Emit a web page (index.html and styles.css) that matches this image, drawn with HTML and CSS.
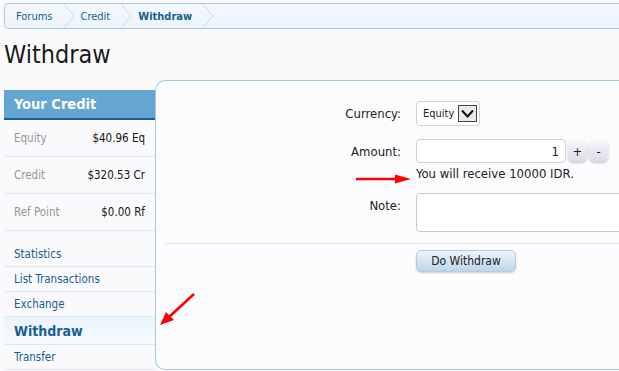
FILE: index.html
```html
<!DOCTYPE html>
<html lang="en">
<head>
  <meta charset="UTF-8">
  <title>Withdraw</title>
  <link rel="stylesheet" href="styles.css">
</head>
<body>
  <div class="page">
    <!-- Breadcrumb -->
    <nav class="crumbs">
      <a class="crumb" href="#">Forums<svg class="chev" viewBox="0 0 12 24"><polyline points="1,0 11,12 1,24"/></svg></a>
      <a class="crumb" href="#">Credit<svg class="chev" viewBox="0 0 12 24"><polyline points="1,0 11,12 1,24"/></svg></a>
      <a class="crumb current" href="#">Withdraw<svg class="chev" viewBox="0 0 12 24"><polyline points="1,0 11,12 1,24"/></svg></a>
    </nav>

    <h1>Withdraw</h1>

    <div class="layout">
      <!-- Sidebar -->
      <aside class="sidebar">
        <div class="side-head">Your Credit</div>
        <div class="stat"><span class="stat-label">Equity</span><span class="stat-value">$40.96 Eq</span></div>
        <div class="stat"><span class="stat-label">Credit</span><span class="stat-value">$320.53 Cr</span></div>
        <div class="stat"><span class="stat-label">Ref Point</span><span class="stat-value">$0.00 Rf</span></div>
        <ul class="side-links">
          <li><a href="#">Statistics</a></li>
          <li><a href="#">List Transactions</a></li>
          <li><a href="#">Exchange</a></li>
          <li class="active"><a href="#">Withdraw</a></li>
          <li><a href="#">Transfer</a></li>
        </ul>
      </aside>

      <!-- Main panel -->
      <main class="panel">
        <div class="row">
          <label class="row-label">Currency:</label>
          <div class="fake-select">
            <span>Equity</span>
            <span class="select-btn"><svg viewBox="0 0 17 14"><polyline points="3,4 8.5,10 14,4"/></svg></span>
          </div>
        </div>
        <div class="row amount-row">
          <label class="row-label">Amount:</label>
          <input class="amount" type="text" value="1">
          <button class="spin">+</button>
          <button class="spin">-</button>
        </div>
        <div class="row hint-row">
          <span class="row-label"></span>
          <span class="hint">You will receive 10000 IDR.</span>
        </div>
        <div class="row note-row">
          <label class="row-label">Note:</label>
          <textarea class="note"></textarea>
        </div>
        <div class="divider"></div>
        <div class="row submit-row">
          <span class="row-label"></span>
          <button class="submit">Do Withdraw</button>
        </div>
      </main>
    </div>

    <!-- Red annotation arrows -->
    <svg class="arrow arrow-hint" viewBox="0 0 60 14">
      <line x1="0" y1="7" x2="42" y2="7"/>
      <polygon points="39,2.5 55,7 39,11.5"/>
    </svg>
    <svg class="arrow arrow-menu" viewBox="0 0 40 40">
      <line x1="37" y1="3" x2="12" y2="26"/>
      <polygon points="3,34 9,21 17,29"/>
    </svg>
  </div>
</body>
</html>
```

FILE: styles.css
```css
/* General */
body {
  margin: 0;
  background: #fafafc;
  color: #222;
  font-family: "DejaVu Sans Condensed", "DejaVu Sans", sans-serif;
  overflow: hidden;
}

.page {
  position: relative;
  width: 680px;
  padding: 3px 0 0 4px;
}

/* Breadcrumb */
.crumbs {
  display: flex;
  height: 24px;
  border: 1px solid #a9c9e3;
  border-right: none;
  border-radius: 5px 0 0 5px;
  background: linear-gradient(#f3f8fc, #edf5fb);
  padding-left: 11px;
}
.crumb {
  display: flex;
  align-items: center;
  color: #176093;
  font-size: 11px;
  text-decoration: none;
}
.crumb.current {
  font-weight: bold;
}
.chev {
  width: 12px;
  height: 24px;
  margin: 0 6px 0 10px;
}
.chev polyline {
  fill: none;
  stroke: #c3dbee;
  stroke-width: 1;
}

/* Title */
h1 {
  font-size: 25px;
  font-weight: normal;
  line-height: 30px;
  margin: 11px 0 10px 0;
  color: #1a1a1a;
}

.layout {
  display: flex;
  align-items: flex-start;
}

/* Sidebar */
.sidebar {
  width: 151px;
  margin-top: 10px;
}
.side-head {
  height: 28px;
  line-height: 28px;
  background: #65a5d1;
  border-bottom: 2px solid #176093;
  color: #fff;
  font-weight: bold;
  font-size: 14.5px;
  padding-left: 10px;
}
.stat {
  box-sizing: border-box;
  height: 37px;
  display: flex;
  justify-content: space-between;
  align-items: center;
  padding: 0 10px;
  border-bottom: 1px solid #d7eaf8;
  font-size: 11.5px;
}
.stat-label {
  color: #969696;
}
.stat-value {
  color: #141414;
}
.side-links {
  list-style: none;
  margin: 11px 0 0 0;
  padding: 0;
}
.side-links li {
  box-sizing: border-box;
  height: 25px;
  display: flex;
  align-items: center;
  padding-left: 10px;
  border-bottom: 1px solid #d7eaf8;
}
.side-links a {
  color: #176093;
  font-size: 11.5px;
  text-decoration: none;
}
.side-links li.active {
  height: 28px;
  background: linear-gradient(#eaf3fa, #f6fafd);
}
.side-links li.active a {
  font-size: 14px;
  font-weight: bold;
}

/* Main panel */
.panel {
  flex: 1;
  box-sizing: border-box;
  height: 290px;
  border: 1px solid #a6c9e2;
  border-right: none;
  border-radius: 10px 0 0 10px;
  background: #fcfcff;
  padding: 20px 0 0 10px;
}
.row {
  display: flex;
  align-items: center;
}
.row-label {
  width: 235px;
  margin-right: 15px;
  text-align: right;
  font-size: 13px;
  color: #222;
}

.fake-select {
  box-sizing: border-box;
  width: 64px;
  height: 25px;
  display: flex;
  align-items: center;
  justify-content: space-between;
  padding: 0 2px 0 6px;
  border: 1px solid #d3d3d3;
  border-radius: 4px;
  background: #fff;
  font-size: 11px;
}
.select-btn {
  box-sizing: border-box;
  width: 19px;
  height: 17px;
  border: 1px solid #444;
  background: #e9e9e9;
  display: flex;
}
.select-btn svg {
  width: 17px;
  height: 15px;
}
.select-btn polyline {
  fill: none;
  stroke: #111;
  stroke-width: 2;
}

.amount-row {
  margin-top: 13px;
}
.amount {
  box-sizing: border-box;
  width: 150px;
  height: 24px;
  border: 1px solid #cfcfcf;
  border-radius: 4px;
  background: #fff;
  text-align: right;
  padding: 0 6px;
  font-family: inherit;
  font-size: 13px;
  color: #222;
}
.spin {
  box-sizing: border-box;
  width: 19px;
  height: 22px;
  margin-left: 2px;
  padding: 0;
  border: none;
  border-radius: 6px;
  background: linear-gradient(#f6f6fa, #dcdce8);
  box-shadow: 0 1px 2px rgba(0, 0, 0, 0.25);
  font-family: inherit;
  font-size: 13px;
  color: #222;
}

.hint-row {
  margin-top: 3px;
}
.hint {
  font-size: 13px;
  line-height: 16px;
}

.note-row {
  margin-top: 11px;
  align-items: flex-start;
}
.note-row .row-label {
  padding-top: 5px;
  line-height: 16px;
}
.note {
  box-sizing: border-box;
  width: 260px;
  height: 39px;
  border: 1px solid #c9c9c9;
  border-radius: 4px;
  background: #fff;
  resize: none;
}

.divider {
  margin: 11px 0 0 -1px;
  border-top: 1px solid #d7e6f2;
}

.submit-row {
  margin-top: 6px;
}
.submit {
  box-sizing: border-box;
  width: 100px;
  height: 22px;
  border: 1px solid #b4cde2;
  border-radius: 5px;
  background: linear-gradient(#edf4fa, #bdd6ea);
  box-shadow: 0 1px 2px rgba(0, 0, 0, 0.2);
  font-family: inherit;
  font-size: 12px;
  color: #222;
}

/* Annotation arrows */
.arrow {
  position: absolute;
}
.arrow line {
  stroke: #f00;
  stroke-width: 2.6;
}
.arrow polygon {
  fill: #f00;
}
.arrow-hint {
  left: 356px;
  top: 172px;
  width: 60px;
  height: 14px;
}
.arrow-menu {
  left: 157px;
  top: 291px;
  width: 40px;
  height: 40px;
}
```
